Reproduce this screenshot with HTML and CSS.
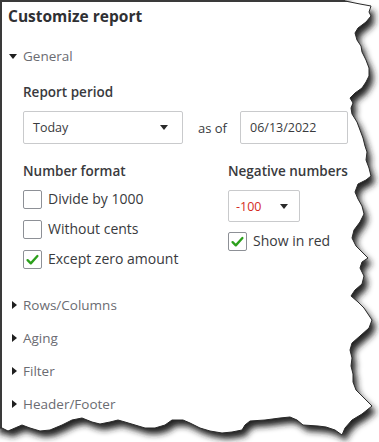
FILE: index.html
```html
<!DOCTYPE html>
<html>
<head>
<meta charset="utf-8">
<link rel="stylesheet" href="styles.css">
</head>
<body>
<div class="panel">
  <h1 class="title">Customize report</h1>
  <section class="section">
    <div class="sec-head"><span class="caret down"></span>General</div>
    <div class="sec-body">
      <div class="label">Report period</div>
      <div class="period-row">
        <div class="select period"><span>Today</span><span class="arrow"></span></div>
        <span class="asof">as of</span>
        <div class="input date">06/13/2022</div>
      </div>
      <div class="format-row">
        <div class="col col-left">
          <div class="label">Number format</div>
          <div class="checks">
            <div class="check"><span class="box"></span><span>Divide by 1000</span></div>
            <div class="check"><span class="box"></span><span>Without cents</span></div>
            <div class="check"><span class="box checked"><svg viewBox="0 0 19 19"><path d="M4 10.2 L7.6 13.8 L15 5.6" fill="none" stroke="#2ca01c" stroke-width="2.6" stroke-linecap="round" stroke-linejoin="round"/></svg></span><span>Except zero amount</span></div>
          </div>
        </div>
        <div class="col col-right">
          <div class="label">Negative numbers</div>
          <div class="select neg"><span class="red">-100</span><span class="arrow"></span></div>
          <div class="check"><span class="box checked"><svg viewBox="0 0 19 19"><path d="M4 10.2 L7.6 13.8 L15 5.6" fill="none" stroke="#2ca01c" stroke-width="2.6" stroke-linecap="round" stroke-linejoin="round"/></svg></span><span>Show in red</span></div>
        </div>
      </div>
    </div>
  </section>
  <div class="collapsed">
    <div class="sec-head"><span class="caret right"></span>Rows/Columns</div>
    <div class="sec-head"><span class="caret right"></span>Aging</div>
    <div class="sec-head"><span class="caret right"></span>Filter</div>
    <div class="sec-head"><span class="caret right"></span>Header/Footer</div>
  </div>
</div>
<svg class="tear" width="379" height="442" viewBox="0 0 379 442">
  <defs>
    <path id="inside" d="M-5 -5 L345 -5 L345 1 L360 4 L371 6 L369 12 L371 16 L366 22 L358 28 L355 33 L357 40 L361 46 L362 52 L366 60 L369 68 L369 76 L366 82 L362 88 L355 93 L350 98 L353 103 L351 108 L352 114 L357 122 L360 130 L363 138 L365 146 L367 152 L366 160 L369 168 L371 176 L366 180 L358 184 L355 192 L358 199 L362 206 L364 214 L360 222 L354 230 L352 238 L356 246 L362 252 L368 258 L362 262 L360 268 L364 276 L362 284 L355 290 L351 296 L358 302 L364 308 L368 314 L372 320 L369 328 L360 336 L352 343 L350 350 L352 358 L351 366 L353 374 L353 382 L356 390 L362 396 L368 402 L372 406 L362 414 L352 420 L345 428 L342 435 L335 430 L326 427 L318 426 L303 425 L297 420 L290 417 L280 418 L265 420 L250 421 L245 425 L242 430 L232 432 L222 433 L210 431 L200 428 L190 423 L183 420 L172 420 L165 425 L155 428 L145 428 L135 425 L125 422 L118 420 L110 422 L100 424 L92 422 L82 418 L72 420 L62 425 L50 430 L40 431 L30 428 L22 425 L15 428 L8 431 L2 428 L-5 428 Z"/>
    <clipPath id="outside">
      <path clip-rule="evenodd" d="M-20 -20 L400 -20 L400 460 L-20 460 Z M-5 -5 L345 -5 L345 1 L360 4 L371 6 L369 12 L371 16 L366 22 L358 28 L355 33 L357 40 L361 46 L362 52 L366 60 L369 68 L369 76 L366 82 L362 88 L355 93 L350 98 L353 103 L351 108 L352 114 L357 122 L360 130 L363 138 L365 146 L367 152 L366 160 L369 168 L371 176 L366 180 L358 184 L355 192 L358 199 L362 206 L364 214 L360 222 L354 230 L352 238 L356 246 L362 252 L368 258 L362 262 L360 268 L364 276 L362 284 L355 290 L351 296 L358 302 L364 308 L368 314 L372 320 L369 328 L360 336 L352 343 L350 350 L352 358 L351 366 L353 374 L353 382 L356 390 L362 396 L368 402 L372 406 L362 414 L352 420 L345 428 L342 435 L335 430 L326 427 L318 426 L303 425 L297 420 L290 417 L280 418 L265 420 L250 421 L245 425 L242 430 L232 432 L222 433 L210 431 L200 428 L190 423 L183 420 L172 420 L165 425 L155 428 L145 428 L135 425 L125 422 L118 420 L110 422 L100 424 L92 422 L82 418 L72 420 L62 425 L50 430 L40 431 L30 428 L22 425 L15 428 L8 431 L2 428 L-5 428 Z"/>
    </clipPath>
    <filter id="blur" x="-10%" y="-10%" width="120%" height="120%">
      <feGaussianBlur stdDeviation="3.4"/>
    </filter>
  </defs>
  <rect x="0" y="0" width="379" height="442" fill="#ffffff" clip-path="url(#outside)"/>
  <g clip-path="url(#outside)">
    <use href="#inside" fill="#222222" filter="url(#blur)" transform="translate(4,6)"/>
  </g>
  <path d="M345 1 L360 4 L371 6 L369 12 L371 16 L366 22 L358 28 L355 33 L357 40 L361 46 L362 52 L366 60 L369 68 L369 76 L366 82 L362 88 L355 93 L350 98 L353 103 L351 108 L352 114 L357 122 L360 130 L363 138 L365 146 L367 152 L366 160 L369 168 L371 176 L366 180 L358 184 L355 192 L358 199 L362 206 L364 214 L360 222 L354 230 L352 238 L356 246 L362 252 L368 258 L362 262 L360 268 L364 276 L362 284 L355 290 L351 296 L358 302 L364 308 L368 314 L372 320 L369 328 L360 336 L352 343 L350 350 L352 358 L351 366 L353 374 L353 382 L356 390 L362 396 L368 402 L372 406 L362 414 L352 420 L345 428 L342 435 L335 430 L326 427 L318 426 L303 425 L297 420 L290 417 L280 418 L265 420 L250 421 L245 425 L242 430 L232 432 L222 433 L210 431 L200 428 L190 423 L183 420 L172 420 L165 425 L155 428 L145 428 L135 425 L125 422 L118 420 L110 422 L100 424 L92 422 L82 418 L72 420 L62 425 L50 430 L40 431 L30 428 L22 425 L15 428 L8 431 L2 428 L0 428" fill="none" stroke="#2a2a2a" stroke-width="1"/>
</svg>
</body>
</html>
```

FILE: styles.css
```css
* { box-sizing: border-box; }
html, body {
  margin: 0;
  padding: 0;
  background: #ffffff;
  width: 379px;
  height: 442px;
  overflow: hidden;
  position: relative;
}
body {
  font-family: "Open Sans", Lato, "Liberation Sans", sans-serif;
  color: #393a3d;
}
.panel {
  width: 379px;
  height: 442px;
  border-top: 2px solid #3a3a3a;
  border-left: 2px solid #3a3a3a;
  padding: 4px 0 0 6px;
}
.title {
  margin: 0;
  font-size: 15.5px;
  line-height: 20px;
  font-weight: 700;
  color: #2f3033;
}
.sec-head {
  display: flex;
  align-items: center;
  height: 20px;
  font-size: 13.5px;
  color: #6b6c72;
}
.section .sec-head {
  margin-top: 20px;
}
.caret {
  width: 15px;
  height: 20px;
  position: relative;
  flex: none;
}
.caret::before {
  content: "";
  position: absolute;
  width: 0;
  height: 0;
}
.caret.down::before {
  left: 1px;
  top: 8px;
  border-left: 4px solid transparent;
  border-right: 4px solid transparent;
  border-top: 5px solid #1f1f1f;
}
.caret.right::before {
  left: 4px;
  top: 6px;
  border-top: 4px solid transparent;
  border-bottom: 4px solid transparent;
  border-left: 5px solid #1f1f1f;
}
.sec-body {
  padding-left: 15px;
}
.label {
  font-size: 13.5px;
  font-weight: 600;
  line-height: 20px;
  color: #393a3d;
}
.sec-body > .label {
  margin-top: 16px;
}
.period-row {
  display: flex;
  align-items: center;
  margin-top: 9px;
}
.select {
  display: flex;
  align-items: center;
  justify-content: space-between;
  border: 1px solid #c9cacc;
  border-radius: 2px;
  background: #fff;
  font-size: 12.5px;
}
.arrow {
  width: 0;
  height: 0;
  border-left: 4px solid transparent;
  border-right: 4px solid transparent;
  border-top: 5px solid #2a2a2a;
}
.period {
  width: 160px;
  height: 33px;
  padding: 0 14px 0 9px;
}
.asof {
  font-size: 13px;
  margin-left: 15px;
  color: #393a3d;
}
.input {
  border: 1px solid #c9cacc;
  border-radius: 2px;
  font-size: 12.5px;
  display: flex;
  align-items: center;
}
.date {
  margin-left: 13px;
  width: 108px;
  height: 33px;
  padding-left: 9px;
  color: #393a3d;
}
.format-row {
  display: flex;
  margin-top: 17px;
}
.col-left {
  width: 205px;
}
.checks {
  display: flex;
  flex-direction: column;
  gap: 11px;
  margin-top: 9px;
}
.check {
  display: flex;
  align-items: center;
  height: 19px;
  font-size: 14px;
  font-weight: 500;
  color: #393a3d;
}
.check span:last-child {
  margin-top: -2px;
}
.box {
  width: 19px;
  height: 19px;
  border: 1px solid #8d9096;
  border-radius: 2px;
  margin-right: 6px;
  flex: none;
  display: block;
}
.box svg {
  display: block;
  width: 17px;
  height: 17px;
}
.check .box {
  margin-top: 0 !important;
}
.neg {
  width: 72px;
  height: 32px;
  margin-top: 9px;
  padding: 0 11px 0 7px;
}
.red {
  color: #d52b1e;
}
.col-right .check {
  margin-top: 10px;
}
.collapsed {
  display: flex;
  flex-direction: column;
  gap: 13px;
  margin-top: 26px;
}
.tear {
  position: absolute;
  left: 0;
  top: 0;
  pointer-events: none;
}
```
